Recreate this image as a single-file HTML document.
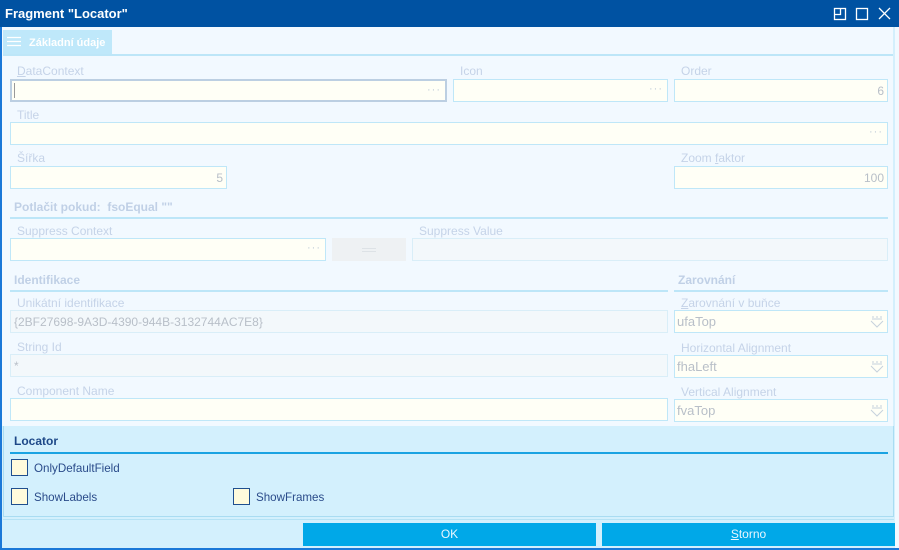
<!DOCTYPE html>
<html><head><meta charset="utf-8"><style>
*{box-sizing:border-box;margin:0;padding:0}
body{width:899px;height:550px;overflow:hidden;font-family:"Liberation Sans",sans-serif;font-size:12px;background:#f2f9ff;position:relative}
.a{position:absolute}
.lbl{position:absolute;color:#c5d3e8;font-size:12px}
.inp{position:absolute;height:23px;background:#fffff6;border:1px solid #bfe7f8}
.dis{background:#f3f8fb;border-color:#d9eef8}
.hdr{position:absolute;color:#c0d0e6;font-weight:bold;font-size:12px}
.line{position:absolute;height:2px;background:#bde6f8}
.dots{position:absolute;right:4px;top:3px;color:#c0ccd8;font-size:11px;letter-spacing:1px}
.val{position:absolute;left:3px;top:4px;color:#b8bfc8;font-size:12px}
.rv{position:absolute;right:3px;top:4px;color:#b8bfc8}
.cb{position:absolute;width:17px;height:17px;background:#fffbdc;border:1px solid #1f4f8f}
.cl{position:absolute;color:#2a4b8a;font-size:11.6px}
.btn{position:absolute;height:23px;background:#00a8e8;color:#e8f6ff;text-align:center;line-height:23px}
.cmb{position:absolute;right:3px;top:5px;width:14px;height:12px}
</style></head><body>
<div class="a" style="left:0;top:0;width:899px;height:27px;background:#0052a2"></div>
<div class="a" style="left:5px;top:6px;color:#fff;font-weight:bold;font-size:13px">Fragment "Locator"</div>
<svg class="a" style="left:832px;top:6px" width="62" height="16" viewBox="0 0 62 16" fill="none" stroke="#fff" stroke-width="1.3">
<rect x="2.5" y="2.5" width="11" height="11"/><path d="M2.5 8.5H8.5V2.5"/>
<rect x="24.5" y="2.5" width="11" height="11"/>
<path d="M47 2L58 13M58 2L47 13"/></svg>
<div class="a" style="left:0;top:27px;width:2px;height:523px;background:#1a78d8"></div>
<div class="a" style="left:893px;top:27px;width:2px;height:500px;background:#d4effc"></div>
<div class="a" style="left:3px;top:30px;width:109px;height:25px;background:#bfe8fa"></div>
<svg class="a" style="left:6px;top:36px" width="16" height="12"><path d="M1 1.5H15M1 5.5H15M1 9.5H15" stroke="#fff" stroke-width="1.2"/></svg>
<div class="a" style="left:29px;top:37px;color:#fff;font-weight:bold;font-size:11px">Základní údaje</div>
<div class="line" style="left:3px;top:54px;width:890px"></div>

<div class="lbl" style="left:17px;top:64px"><u>D</u>ataContext</div>
<div class="inp" style="left:10px;top:79px;width:437px;border:2px solid #bccfe2"><div class="a" style="left:2px;top:2px;width:1px;height:15px;background:#999"></div><span class="dots">···</span></div>
<div class="lbl" style="left:460px;top:64px">Icon</div>
<div class="inp" style="left:453px;top:79px;width:215px"><span class="dots">···</span></div>
<div class="lbl" style="left:681px;top:64px">Order</div>
<div class="inp" style="left:674px;top:79px;width:214px"><span class="rv">6</span></div>

<div class="lbl" style="left:17px;top:108px">Title</div>
<div class="inp" style="left:10px;top:122px;width:878px"><span class="dots">···</span></div>

<div class="lbl" style="left:17px;top:151px">Šířka</div>
<div class="inp" style="left:10px;top:166px;width:217px"><span class="rv">5</span></div>
<div class="lbl" style="left:681px;top:151px">Zoom <u>f</u>aktor</div>
<div class="inp" style="left:674px;top:166px;width:214px"><span class="rv">100</span></div>

<div class="hdr" style="left:14px;top:200px">Potlačit pokud:&nbsp; fsoEqual ""</div>
<div class="line" style="left:10px;top:217px;width:878px"></div>
<div class="lbl" style="left:17px;top:224px">Suppress Context</div>
<div class="inp" style="left:10px;top:238px;width:316px"><span class="dots">···</span></div>
<div class="a" style="left:332px;top:238px;width:74px;height:23px;background:#eef1f3"><div class="a" style="left:30px;top:10px;width:14px;height:1px;background:#dde2e6"></div><div class="a" style="left:30px;top:13px;width:14px;height:1px;background:#dde2e6"></div></div>
<div class="lbl" style="left:419px;top:224px">Suppress Value</div>
<div class="inp dis" style="left:412px;top:238px;width:476px"></div>

<div class="hdr" style="left:14px;top:273px">Identifikace</div>
<div class="line" style="left:10px;top:290px;width:658px"></div>
<div class="hdr" style="left:678px;top:273px">Zarovnání</div>
<div class="line" style="left:674px;top:290px;width:214px"></div>

<div class="lbl" style="left:17px;top:296px">Unikátní identifikace</div>
<div class="inp dis" style="left:10px;top:310px;width:658px"><span class="val">{2BF27698-9A3D-4390-944B-3132744AC7E8}</span></div>
<div class="lbl" style="left:681px;top:296px"><u>Z</u>arovnání v buňce</div>
<div class="inp" style="left:674px;top:310px;width:214px"><span class="val" style="left:2px;top:3px;font-size:13px">ufaTop</span><svg class="cmb" viewBox="0 0 14 12"><path d="M2 1h2M6 1h2M10 1h2M2 3h10M1 5l6 6 6-6" stroke="#c6d2dc" fill="none"/></svg></div>

<div class="lbl" style="left:17px;top:340px">String Id</div>
<div class="inp dis" style="left:10px;top:354px;width:658px"><span class="val">*</span></div>
<div class="lbl" style="left:681px;top:341px">Horizontal Alignment</div>
<div class="inp" style="left:674px;top:355px;width:214px"><span class="val" style="left:2px;top:3px;font-size:13px">fhaLeft</span><svg class="cmb" viewBox="0 0 14 12"><path d="M2 1h2M6 1h2M10 1h2M2 3h10M1 5l6 6 6-6" stroke="#c6d2dc" fill="none"/></svg></div>

<div class="lbl" style="left:17px;top:384px">Component Name</div>
<div class="inp" style="left:10px;top:398px;width:658px"></div>
<div class="lbl" style="left:681px;top:385px">Vertical Alignment</div>
<div class="inp" style="left:674px;top:399px;width:214px"><span class="val" style="left:2px;top:3px;font-size:13px">fvaTop</span><svg class="cmb" viewBox="0 0 14 12"><path d="M2 1h2M6 1h2M10 1h2M2 3h10M1 5l6 6 6-6" stroke="#c6d2dc" fill="none"/></svg></div>

<div class="a" style="left:2px;top:426px;width:893px;height:124px;background:#d3f0fd"></div>
<div class="a" style="left:3px;top:426px;width:891px;height:91px;border:1px solid #a9dcf2;border-top:none"></div>
<div class="a" style="left:3px;top:519px;width:891px;height:1px;background:#b5e2f5"></div>
<div class="a" style="left:14px;top:434px;color:#1d4888;font-weight:bold;font-size:12px">Locator</div>
<div class="a" style="left:10px;top:452px;width:878px;height:2px;background:#1aa3e2"></div>
<div class="cb" style="left:11px;top:459px"></div>
<div class="cl" style="left:34px;top:462px">OnlyDefaultField</div>
<div class="cb" style="left:11px;top:488px"></div>
<div class="cl" style="left:34px;top:491px">ShowLabels</div>
<div class="cb" style="left:233px;top:488px"></div>
<div class="cl" style="left:256px;top:491px">ShowFrames</div>

<div class="btn" style="left:303px;top:523px;width:293px">OK</div>
<div class="btn" style="left:602px;top:523px;width:293px"><u>S</u>torno</div>
<div class="a" style="left:0;top:548px;width:899px;height:2px;background:#1a78d8"></div>
</body></html>
